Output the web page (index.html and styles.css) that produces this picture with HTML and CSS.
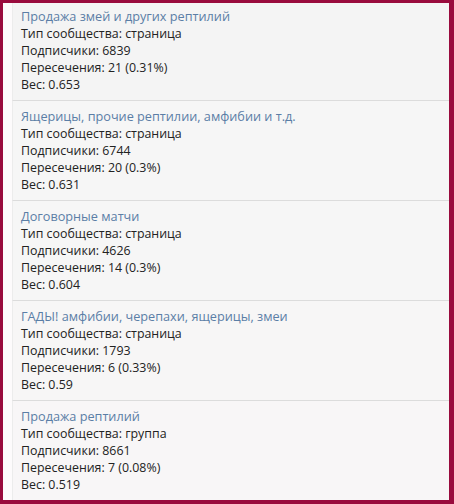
FILE: index.html
```html
<!DOCTYPE html>
<html lang="ru">
<head>
<meta charset="utf-8">
<link rel="stylesheet" href="styles.css">
</head>
<body>
<div class="frame">
  <div class="list">
    <div class="item">
      <div class="title">Продажа змей и других рептилий</div>
      <div>Тип сообщества: страница</div>
      <div>Подписчики: 6839</div>
      <div>Пересечения: 21 (0.31%)</div>
      <div>Вес: 0.653</div>
    </div>
    <div class="item">
      <div class="title">Ящерицы, прочие рептилии, амфибии и т.д.</div>
      <div>Тип сообщества: страница</div>
      <div>Подписчики: 6744</div>
      <div>Пересечения: 20 (0.3%)</div>
      <div>Вес: 0.631</div>
    </div>
    <div class="item">
      <div class="title">Договорные матчи</div>
      <div>Тип сообщества: страница</div>
      <div>Подписчики: 4626</div>
      <div>Пересечения: 14 (0.3%)</div>
      <div>Вес: 0.604</div>
    </div>
    <div class="item">
      <div class="title">ГАДЫ! амфибии, черепахи, ящерицы, змеи</div>
      <div>Тип сообщества: страница</div>
      <div>Подписчики: 1793</div>
      <div>Пересечения: 6 (0.33%)</div>
      <div>Вес: 0.59</div>
    </div>
    <div class="item last">
      <div class="title">Продажа рептилий</div>
      <div>Тип сообщества: группа</div>
      <div>Подписчики: 8661</div>
      <div>Пересечения: 7 (0.08%)</div>
      <div>Вес: 0.519</div>
    </div>
  </div>
</div>
</body>
</html>
```

FILE: styles.css
```css
html, body {
  margin: 0;
  padding: 0;
  background: #990b3d;
}
.frame {
  width: 454px;
  height: 504px;
  box-sizing: border-box;
  padding: 3px 5px 4px 3px;
  background: #990b3d;
}
.list {
  height: 100%;
  box-sizing: border-box;
  background: #fdfbfc;
  padding-left: 9px;
  overflow: hidden;
}
.item {
  height: 100px;
  box-sizing: border-box;
  padding: 7px 8px;
  background: #f4f4f4;
  border-top: 1px solid #dcdcdc;
  border-left: 1px solid #ececec;
  font-family: "Open Sans", sans-serif;
  font-size: 12.4px;
  line-height: 17px;
  color: #222;
}
.item:first-child {
  height: 97px;
  border-top: none;
  padding-top: 5px;
}
.item:nth-child(2) { background: #f6f6f6; }
.item:nth-child(3) { background: #f6f6f6; }
.item:nth-child(4) { background: #f7f6f6; }
.item.last { background: #f8f6f7; }
.title {
  color: #5b7ea6;
  font-size: 12.7px;
}
```
